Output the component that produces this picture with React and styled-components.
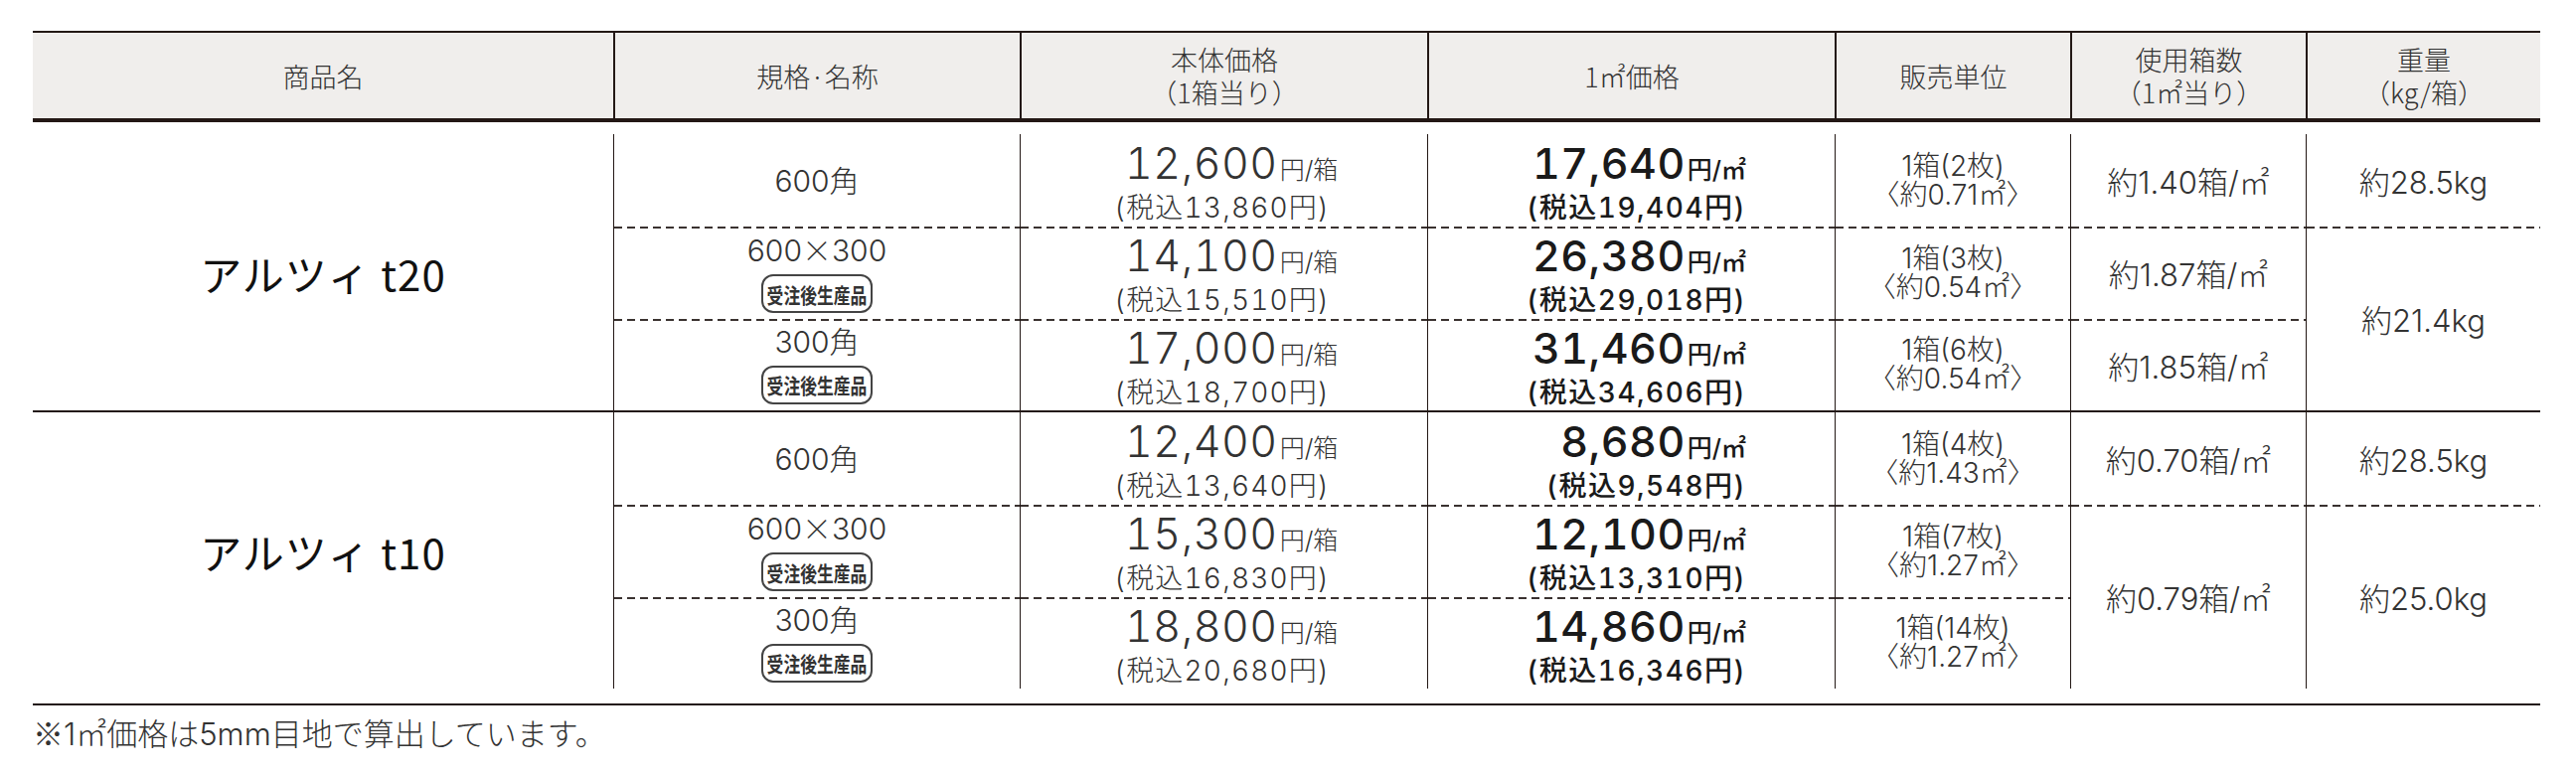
import React from 'react';
import styled, { createGlobalStyle, css } from 'styled-components';

const INK = '#231815';
const COLS = '584px 409px 410px 410px 237px 237px 236px';
const JP = '"Noto Sans CJK JP", "Noto Sans", sans-serif';
const NUM = 'Inter, "Noto Sans CJK JP", sans-serif';

const Global = createGlobalStyle`
  html, body { margin: 0; padding: 0; background: #fff; }
  body { font-family: ${JP}; color: #333; }
`;

const Page = styled.div`
  padding: 31px 0 0 33px;
  width: 2523px;
`;

const Head = styled.div`
  display: grid;
  grid-template-columns: ${COLS};
  height: 86px;
  background: #f0eeec;
  border-top: 2px solid ${INK};
  border-bottom: 4px solid ${INK};
`;

const HeadCell = styled.div`
  display: flex;
  align-items: center;
  justify-content: center;
  text-align: center;
  font-size: 27px;
  line-height: 33px;
  font-weight: 300;
  color: #333;
  & + & { border-left: 2px solid ${INK}; }
`;

const Body = styled.div`
  padding: 12px 0 15px;
  border-bottom: 2px solid ${INK};
`;

const Group = styled.div`
  display: grid;
  grid-template-columns: ${COLS};
  grid-template-rows: 93px 93px 92px;
  & + & { border-top: 2px solid ${INK}; }
`;

const Cell = styled.div`
  grid-column: ${p => p.$col};
  grid-row: ${p => p.$row} / span ${p => p.$span || 1};
  display: flex;
  flex-direction: column;
  justify-content: center;
  align-items: ${p => p.$align || 'center'};
  padding: ${p => p.$pad || '0'};
  border-left: ${p => (p.$col > 1 ? `1px solid ${INK}` : 'none')};
  ${p => p.$dash && css`
    background: linear-gradient(to right, #3a3230 8px, transparent 8px) 0 0 / 13px 2px repeat-x;
  `}
`;

const Product = styled.div`
  font-size: 42px;
  font-weight: 400;
  color: #111;
  letter-spacing: 1px;
`;

const Size = styled.div`
  font-family: ${NUM};
  font-size: 30px;
  line-height: 32px;
  font-weight: 300;
  color: #333;
`;

const Jp = styled.span`
  font-family: ${JP};
  font-weight: 300;
`;

const Badge = styled.div`
  display: flex;
  align-items: center;
  justify-content: center;
  box-sizing: border-box;
  width: 112px;
  height: 39px;
  margin-top: 8px;
  border: 2px solid #444;
  border-radius: 12px;
  font-size: 21px;
  font-weight: 700;
  color: #333;
  overflow: hidden;
  & > span { display: inline-block; white-space: nowrap; transform: scaleX(0.8); }
`;

const PriceLine = styled.div`
  display: flex;
  align-items: baseline;
  white-space: nowrap;
  line-height: 40px;
  font-family: ${NUM};
  font-weight: ${p => (p.$bold ? 500 : 300)};
  color: ${p => (p.$bold ? '#1a1a1a' : '#333')};
  margin-left: ${p => p.$indent || 0}px;
`;

const Big = styled.span`
  font-size: 43px;
  letter-spacing: 0.5px;
  font-variant-numeric: tabular-nums;
`;

const Unit = styled.span`
  font-size: 25px;
  margin-left: 2px;
`;

const TaxLine = styled.div`
  font-family: ${NUM};
  font-size: 28px;
  line-height: 36px;
  white-space: nowrap;
  font-weight: ${p => (p.$bold ? 500 : 300)};
  color: ${p => (p.$bold ? '#1a1a1a' : '#333')};
  letter-spacing: ${p => (p.$bold ? 1.5 : 1.2)}px;
  font-variant-numeric: tabular-nums;
`;

const Small = styled.div`
  font-family: ${NUM};
  font-size: 28px;
  line-height: 29px;
  font-weight: 300;
  color: #333;
  white-space: nowrap;
`;

const Plain = styled.div`
  font-family: ${NUM};
  font-size: 31px;
  font-weight: 300;
  color: #333;
  white-space: nowrap;
`;

const Note = styled.div`
  margin-top: 7px;
  font-family: ${NUM};
  font-size: 31px;
  line-height: 40px;
  font-weight: 300;
  color: #333;
`;

const groups = [
  {
    name: 'アルツィ t20',
    rows: [
      { size: '600角', badge: false, price: '12,600', tax: '13,860', m2: '17,640', m2tax: '19,404', unit: '1箱(2枚)', area: '〈約0.71㎡〉' },
      { size: '600×300', badge: true, price: '14,100', tax: '15,510', m2: '26,380', m2tax: '29,018', unit: '1箱(3枚)', area: '〈約0.54㎡〉' },
      { size: '300角', badge: true, price: '17,000', tax: '18,700', m2: '31,460', m2tax: '34,606', unit: '1箱(6枚)', area: '〈約0.54㎡〉' },
    ],
    boxes: [
      { row: 1, span: 1, text: '約1.40箱/㎡' },
      { row: 2, span: 1, text: '約1.87箱/㎡' },
      { row: 3, span: 1, text: '約1.85箱/㎡' },
    ],
    weights: [
      { row: 1, span: 1, text: '約28.5kg' },
      { row: 2, span: 2, text: '約21.4kg' },
    ],
  },
  {
    name: 'アルツィ t10',
    rows: [
      { size: '600角', badge: false, price: '12,400', tax: '13,640', m2: '8,680', m2tax: '9,548', unit: '1箱(4枚)', area: '〈約1.43㎡〉' },
      { size: '600×300', badge: true, price: '15,300', tax: '16,830', m2: '12,100', m2tax: '13,310', unit: '1箱(7枚)', area: '〈約1.27㎡〉' },
      { size: '300角', badge: true, price: '18,800', tax: '20,680', m2: '14,860', m2tax: '16,346', unit: '1箱(14枚)', area: '〈約1.27㎡〉' },
    ],
    boxes: [
      { row: 1, span: 1, text: '約0.70箱/㎡' },
      { row: 2, span: 2, text: '約0.79箱/㎡' },
    ],
    weights: [
      { row: 1, span: 1, text: '約28.5kg' },
      { row: 2, span: 2, text: '約25.0kg' },
    ],
  },
];

function SizeLabel({ text }) {
  const parts = text.split('×');
  if (parts.length === 1) return <Size>{text}</Size>;
  return <Size>{parts[0]}<Jp>×</Jp>{parts[1]}</Size>;
}

export default function App() {
  return (
    <Page>
      <Global />
      <Head>
        <HeadCell>商品名</HeadCell>
        <HeadCell>規格·名称</HeadCell>
        <HeadCell>本体価格<br />（1箱当り）</HeadCell>
        <HeadCell>1㎡価格</HeadCell>
        <HeadCell>販売単位</HeadCell>
        <HeadCell>使用箱数<br />（1㎡当り）</HeadCell>
        <HeadCell>重量<br />（kg/箱）</HeadCell>
      </Head>
      <Body>
        {groups.map(g => (
          <Group key={g.name}>
            <Cell $col={1} $row={1} $span={3}>
              <Product>{g.name}</Product>
            </Cell>
            {g.rows.map((r, i) => (
              <React.Fragment key={i}>
                <Cell $col={2} $row={i + 1} $dash={i > 0}>
                  <SizeLabel text={r.size} />
                  {r.badge && <Badge><span>受注後生産品</span></Badge>}
                </Cell>
                <Cell $col={3} $row={i + 1} $dash={i > 0} $align="flex-start" $pad="8px 0 0 94px">
                  <PriceLine $indent={11}><Big>{r.price}</Big><Unit>円/箱</Unit></PriceLine>
                  <TaxLine>(税込{r.tax}円)</TaxLine>
                </Cell>
                <Cell $col={4} $row={i + 1} $dash={i > 0} $align="flex-end" $pad="8px 89px 0 0">
                  <PriceLine $bold><Big>{r.m2}</Big><Unit>円/㎡</Unit></PriceLine>
                  <TaxLine $bold>(税込{r.m2tax}円)</TaxLine>
                </Cell>
                <Cell $col={5} $row={i + 1} $dash={i > 0}>
                  <Small>{r.unit}</Small>
                  <Small>{r.area}</Small>
                </Cell>
              </React.Fragment>
            ))}
            {g.boxes.map(b => (
              <Cell key={'b' + b.row} $col={6} $row={b.row} $span={b.span} $dash={b.row > 1}>
                <Plain>{b.text}</Plain>
              </Cell>
            ))}
            {g.weights.map(w => (
              <Cell key={'w' + w.row} $col={7} $row={w.row} $span={w.span} $dash={w.row > 1}>
                <Plain>{w.text}</Plain>
              </Cell>
            ))}
          </Group>
        ))}
      </Body>
      <Note><Jp>※</Jp>1㎡価格は5mm目地で算出しています。</Note>
    </Page>
  );
}
